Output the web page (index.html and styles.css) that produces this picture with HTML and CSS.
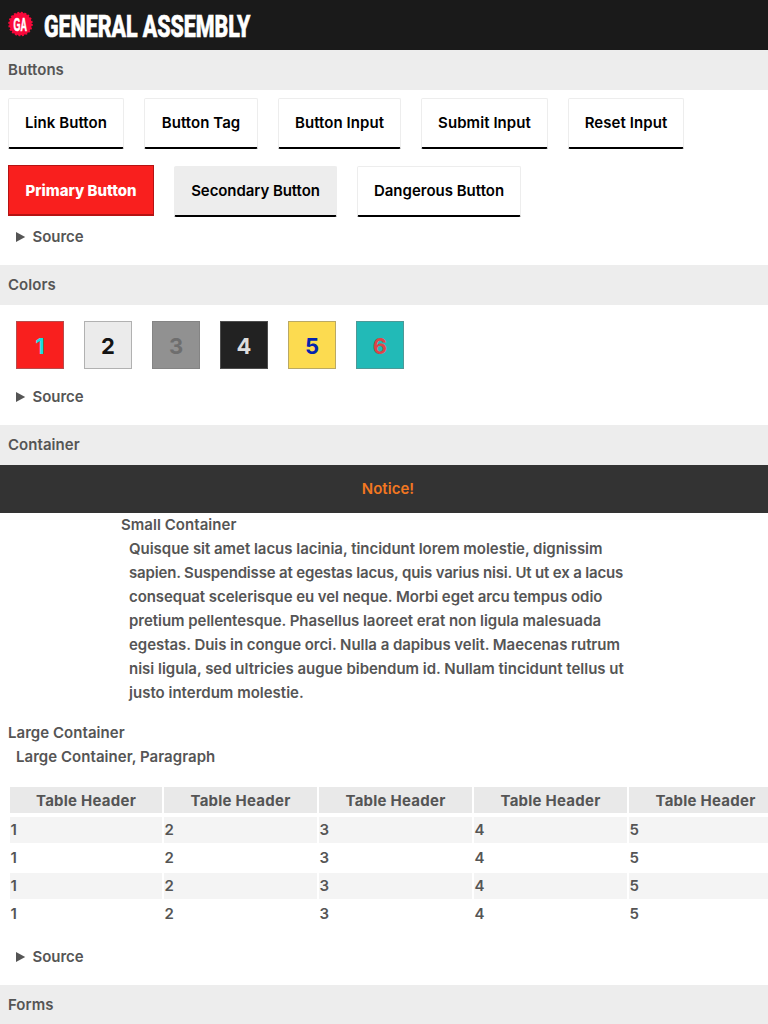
FILE: index.html
```html
<!DOCTYPE html>
<html lang="en">
<head>
<meta charset="utf-8">
<title>General Assembly</title>
<link rel="stylesheet" href="styles.css">
</head>
<body>
<header class="top">
<svg class="logo" width="26" height="26" viewBox="0 0 26 26"><circle cx="12.5" cy="13" r="11.2" fill="#f9083a"/><circle cx="12.5" cy="13" r="11.4" fill="none" stroke="#f9083a" stroke-width="1.8" stroke-dasharray="2 1.581"/><g transform="translate(5.5 20) scale(.47 1)"><text class="logo-text">GA</text></g></svg>
<h1 class="brand"><span class="brand-text">GENERAL ASSEMBLY</span></h1>
</header>
<h2 class="bar">Buttons</h2>
<section class="buttons">
<div class="row">
<a class="btn w116">Link Button</a><button class="btn w114">Button Tag</button><button class="btn w123">Button Input</button><button class="btn w127">Submit Input</button><button class="btn w116">Reset Input</button>
</div>
<div class="row second">
<button class="btn primary">Primary Button</button><button class="btn secondary">Secondary Button</button><button class="btn danger">Dangerous Button</button>
</div>
<div class="source"><svg width="10" height="12"><path d="M0 1L9.2 6L0 11z" fill="#555"/></svg>Source</div>
</section>
<h2 class="bar">Colors</h2>
<section class="colors">
<div class="swatches"><span class="sw c1">1</span><span class="sw c2">2</span><span class="sw c3">3</span><span class="sw c4">4</span><span class="sw c5">5</span><span class="sw c6">6</span></div>
<div class="source"><svg width="10" height="12"><path d="M0 1L9.2 6L0 11z" fill="#555"/></svg>Source</div>
</section>
<h2 class="bar">Container</h2>
<div class="notice">Notice!</div>
<section class="small">
<div>Small Container</div>
<p class="para"><span class="l1">Quisque sit amet lacus lacinia, tincidunt lorem molestie, dignissim</span><br><span class="l2">sapien. Suspendisse at egestas lacus, quis varius nisi. Ut ut ex a lacus</span><br><span class="l3">consequat scelerisque eu vel neque. Morbi eget arcu tempus odio</span><br><span class="l4">pretium pellentesque. Phasellus laoreet erat non ligula malesuada</span><br><span class="l5">egestas. Duis in congue orci. Nulla a dapibus velit. Maecenas rutrum</span><br><span class="l6">nisi ligula, sed ultricies augue bibendum id. Nullam tincidunt tellus ut</span><br><span class="l7">justo interdum molestie.</span></p>
</section>
<section class="large">
<div>Large Container</div>
<p class="para">Large Container, Paragraph</p>
</section>
<div class="table">
<div class="tr head"><b>Table Header</b><b>Table Header</b><b>Table Header</b><b>Table Header</b><b>Table Header</b></div>
<div class="tr odd"><span>1</span><span>2</span><span>3</span><span>4</span><span>5</span></div>
<div class="tr"><span>1</span><span>2</span><span>3</span><span>4</span><span>5</span></div>
<div class="tr odd"><span>1</span><span>2</span><span>3</span><span>4</span><span>5</span></div>
<div class="tr"><span>1</span><span>2</span><span>3</span><span>4</span><span>5</span></div>
</div>
<div class="source last"><svg width="10" height="12"><path d="M0 1L9.2 6L0 11z" fill="#555"/></svg>Source</div>
<h2 class="bar">Forms</h2>
</body>
</html>
```
FILE: styles.css
```css
* { box-sizing: border-box; }
body { margin: 0; height: 1024px; overflow: hidden; background: #fff; color: #555; font: 560 15px/24px Inter, sans-serif; letter-spacing: .04px; }
.top { height: 50px; background: #1a1a1a; display: flex; padding-left: 8px; letter-spacing: 0; }
.logo { margin-top: 11px; overflow: visible; }
.logo-text { font: 700 19px "Liberation Sans", sans-serif; fill: #fff; stroke: #fff; stroke-width: .6px; }
.brand { margin: 0 0 0 10px; width: 215px; height: 50px; }
.brand-text { display: inline-block; white-space: nowrap; color: #fff; font: 800 31px/53px Roboto, sans-serif; transform: scaleX(.69); transform-origin: 0 0; -webkit-text-stroke: .7px #fff; }
.bar { margin: 0; height: 40px; padding: 8px; background: #ededed; font: inherit; }
.buttons { height: 175px; padding: 8px 8px 0; }
.row { display: flex; gap: 20px; height: 51px; }
.second { margin-top: 16px; height: 52px; align-items: flex-start; }
.btn { height: 51px; padding: 0; border: 1px solid #ededed; border-bottom: 2px solid #000; border-radius: 2px; background: #fff; color: #000; font: inherit; letter-spacing: .07px; line-height: 48px; text-align: center; white-space: nowrap; }
.w116 { width: 116px; }
.w114 { width: 114px; }
.w123 { width: 123px; }
.w127 { width: 127px; }
.primary { width: 146px; padding-top: 1px; background: #f91f1e; border-color: #b51313; border-radius: 0; color: #fff; font-weight: 800; letter-spacing: -.02px; }
.secondary { width: 163px; margin-top: 1px; background: #ededed; letter-spacing: -.07px; }
.danger { width: 164px; margin-top: 1px; letter-spacing: 0; }
.source { display: flex; align-items: center; gap: 6.5px; height: 24px; padding-left: 16px; letter-spacing: -.06px; }
.buttons .source { margin-top: 8px; padding-left: 8px; }
.colors { height: 120px; padding-top: 16px; }
.swatches { display: flex; gap: 20px; padding-left: 16px; margin-bottom: 16px; }
.sw { width: 48px; height: 48px; border: 1px solid rgba(120, 120, 120, .5); text-align: center; font-size: 22px; font-weight: 650; line-height: 48px; letter-spacing: 0; }
.c1 { background: #f91f1e; color: #15dfe0; }
.c2 { background: #ebebeb; color: #141414; }
.c3 { background: #919191; color: #6e6e6e; }
.c4 { background: #222; color: #ddd; }
.c5 { background: #fcdb50; color: #0324af; }
.c6 { background: #22bab7; color: #dd4548; }
.notice { height: 48px; padding: 12px 0 0 8px; background: #333; color: #f27721; text-align: center; }
.small { height: 208px; padding-left: 121px; white-space: nowrap; }
.para { margin: 0; padding-left: 8px; }
.l1 { letter-spacing: -.03px; }
.l2 { letter-spacing: -.17px; }
.l3 { letter-spacing: -.06px; }
.l4 { letter-spacing: -.04px; }
.l5 { letter-spacing: -.05px; }
.l6 { letter-spacing: -.01px; }
.l7 { letter-spacing: .01px; }
.large { height: 64px; padding-left: 8px; }
.table { padding: 2px 0 0 10px; overflow: hidden; }
.tr { display: grid; grid-template-columns: 152px repeat(4, 153px); column-gap: 2px; height: 26px; margin-bottom: 2px; line-height: 26px; }
.tr > * { padding-left: 1px; }
.tr b { padding: 0; background: #e9e9e9; text-align: center; font-weight: 700; letter-spacing: .24px; line-height: 28px; height: 26px; }
.head { margin-bottom: 4px; }
.tr span { font-weight: 600; font-size: 15px; padding-left: .5px; }
.odd span { background: #f4f4f4; }
.last { margin: 16px 0; }
```
